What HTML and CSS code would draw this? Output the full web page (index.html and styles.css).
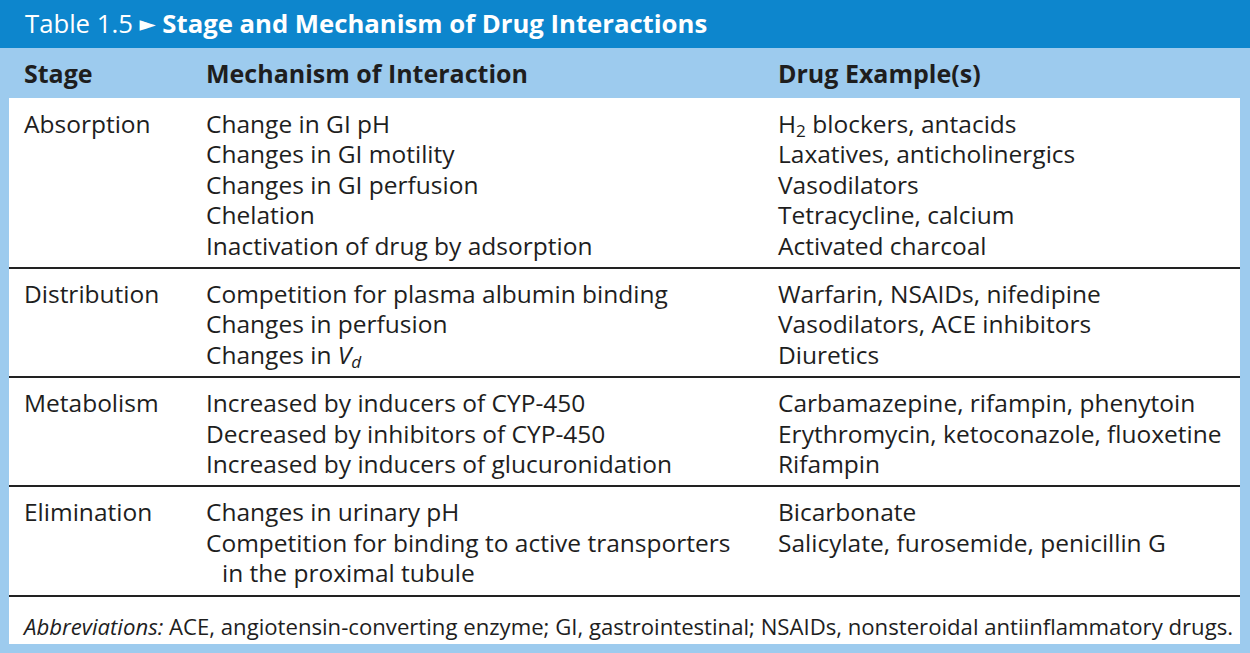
FILE: index.html
```html
<!DOCTYPE html>
<html lang="en">
<head>
    <meta charset="UTF-8">
    <meta name="viewport" content="width=device-width, initial-scale=1.0">
    <title>Table 1.5 - Stage and Mechanism of Drug Interactions</title>
    <link rel="stylesheet" href="styles.css">
</head>
<body>
    <div class="table-box">
        <div class="caption">
            <span class="caption-num">Table 1.5 <span class="arrow">&#9658;</span></span>
            <strong>Stage and Mechanism of Drug Interactions</strong>
        </div>
        <div class="frame">
            <table class="drug-table">
                <colgroup>
                    <col class="col-stage">
                    <col class="col-mech">
                    <col class="col-drug">
                </colgroup>
                <thead>
                    <tr>
                        <th>Stage</th>
                        <th>Mechanism of Interaction</th>
                        <th>Drug Example(s)</th>
                    </tr>
                </thead>
                <tbody>
                    <tr class="first">
                        <td>Absorption</td>
                        <td>
                            <div>Change in GI pH</div>
                            <div>Changes in GI motility</div>
                            <div>Changes in GI perfusion</div>
                            <div>Chelation</div>
                            <div>Inactivation of drug by adsorption</div>
                        </td>
                        <td>
                            <div>H<sub>2</sub> blockers, antacids</div>
                            <div>Laxatives, anticholinergics</div>
                            <div>Vasodilators</div>
                            <div>Tetracycline, calcium</div>
                            <div>Activated charcoal</div>
                        </td>
                    </tr>
                    <tr>
                        <td>Distribution</td>
                        <td>
                            <div>Competition for plasma albumin binding</div>
                            <div>Changes in perfusion</div>
                            <div>Changes in <i>V<sub>d</sub></i></div>
                        </td>
                        <td>
                            <div>Warfarin, NSAIDs, nifedipine</div>
                            <div>Vasodilators, ACE inhibitors</div>
                            <div>Diuretics</div>
                        </td>
                    </tr>
                    <tr>
                        <td>Metabolism</td>
                        <td>
                            <div>Increased by inducers of CYP-450</div>
                            <div>Decreased by inhibitors of CYP-450</div>
                            <div>Increased by inducers of glucuronidation</div>
                        </td>
                        <td>
                            <div>Carbamazepine, rifampin, phenytoin</div>
                            <div>Erythromycin, ketoconazole, fluoxetine</div>
                            <div>Rifampin</div>
                        </td>
                    </tr>
                    <tr>
                        <td>Elimination</td>
                        <td>
                            <div>Changes in urinary pH</div>
                            <div>Competition for binding to active transporters</div>
                            <div class="indent">in the proximal tubule</div>
                        </td>
                        <td>
                            <div>Bicarbonate</div>
                            <div>Salicylate, furosemide, penicillin G</div>
                        </td>
                    </tr>
                </tbody>
                <tfoot>
                    <tr>
                        <td colspan="3"><i>Abbreviations:</i> ACE, angiotensin-converting enzyme; GI, gastrointestinal; NSAIDs, nonsteroidal antiinflammatory drugs.</td>
                    </tr>
                </tfoot>
            </table>
        </div>
    </div>
</body>
</html>
```

FILE: styles.css
```css
body {
    margin: 0;
    padding: 0;
    background-color: #ffffff;
    font-family: "Open Sans", "Noto Sans", sans-serif;
    color: #1e1e1e;
}
.table-box {
    width: 1250px;
    height: 653px;
    background-color: #9dcbee;
}
.caption {
    height: 48px;
    background-color: #0d86cd;
    color: white;
    font-size: 25.7px;
    line-height: 48px;
    padding-left: 25px;
    box-sizing: border-box;
    white-space: nowrap;
}
.caption-num {
    font-weight: normal;
}
.arrow {
    font-family: "DejaVu Sans", sans-serif;
    font-size: 21px;
    position: relative;
    top: -2px;
}
.caption strong {
    font-weight: bold;
}
.frame {
    padding: 0 10px 10px 9px;
}
.drug-table {
    width: 100%;
    border-collapse: collapse;
    table-layout: fixed;
    font-size: 24.5px;
    line-height: 30.4px;
}
.col-stage {
    width: 197px;
}
.col-mech {
    width: 572px;
}
.drug-table th {
    height: 50px;
    padding: 0;
    text-align: left;
    font-weight: bold;
    font-size: 25px;
    vertical-align: middle;
}
.drug-table th:first-child,
.drug-table td:first-child {
    padding-left: 15px;
}
.drug-table tbody td {
    background-color: white;
    vertical-align: top;
    padding: 10px 0 6px 0;
    border-bottom: 2px solid #222;
}
.drug-table tbody tr.first td {
    padding-top: 11px;
}
.drug-table sub {
    font-size: 0.7em;
    line-height: 0;
    vertical-align: -0.25em;
}
.indent {
    padding-left: 16px;
}
.drug-table tfoot td {
    background-color: white;
    font-size: 22.15px;
    line-height: 30px;
    padding: 14px 0 3px 15px;
    white-space: nowrap;
}
```
